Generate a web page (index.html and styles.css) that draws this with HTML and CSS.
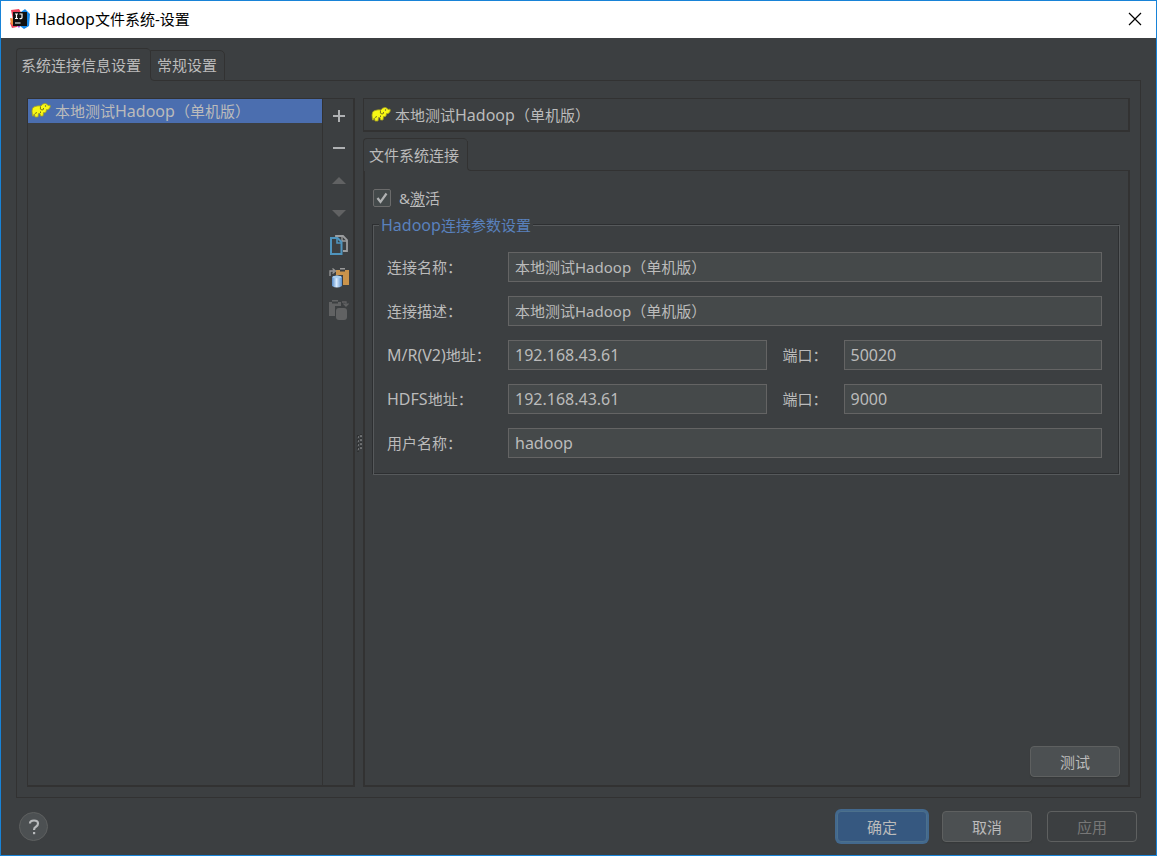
FILE: index.html
```
<!DOCTYPE html>
<html lang="zh-CN">
<head>
<meta charset="utf-8">
<title>Hadoop文件系统-设置</title>
<link rel="stylesheet" href="styles.css">
</head>
<body>
<svg class="defs" aria-hidden="true">
  <symbol id="elephant" viewBox="0 0 20 18">
    <path d="M1 9Q1 5 4 4.500Q7 3.500 10 4Q11 1.500 14 1.500Q16 1.500 16.500 3Q18 4 19 3Q20 5 18 7Q16.500 8 15.500 7.500L15 10Q14 11 12.500 10.500L12 14H9.500L9 11.500L7.500 11.500L7 15H4L3.500 12Q2.500 12 2.500 14H1.500Z" fill="#f8f814" stroke="#a5a021" stroke-width=".8"/>
    <path d="M9.500 4.500Q8.500 8 11 8Q13 8 12.500 6M4.500 12L5.500 10M9.500 11V9.500" fill="none" stroke="#77751f" stroke-width="1"/>
    <circle cx="14.500" cy="4" r=".7" fill="#555"/>
  </symbol>
</svg>
<div class="window">
  <header class="titlebar">
    <svg class="logo" width="20" height="20" viewBox="0 0 20 20" aria-hidden="true">
      <path d="M1 1L9 0 12 5 7 18 2 19 0 14 3 11Z" fill="#f0435a"/>
      <path d="M0 9L6 10 5 17 1 15Z" fill="#f68b3c"/>
      <path d="M11 3L15 0 20 5 19 17 14 20 10 17Z" fill="#1687e8"/>
      <path d="M6 16L11 16 9 19Z" fill="#b34dd0"/>
      <rect x="3" y="3" width="14" height="14" fill="#111"/>
      <path d="M5 5H8M6.500 5V9.500M5 9.500H8M9.500 5H12V8.500Q12 9.800 9.500 9.500M5 14H10.500" fill="none" stroke="#fff" stroke-width="1.200"/>
    </svg>
    <h1 class="title"><span class="latin">Hadoop</span>文件系统-设置</h1>
    <button class="close" type="button" aria-label="关闭"><svg width="14" height="14" viewBox="0 0 14 14"><path d="M1 1L13 13M13 1L1 13" stroke="#000" stroke-width="1.200"/></svg></button>
  </header>
  <main class="body">
    <div class="tabs" role="tablist">
      <button class="tab tab-active" type="button" role="tab" aria-selected="true">系统连接信息设置</button>
      <button class="tab tab-idle" type="button" role="tab" aria-selected="false">常规设置</button>
      <span class="tab-line"></span>
    </div>
    <div class="page">
      <section class="connections">
        <div class="list">
          <button class="list-item" type="button"><svg class="elephant"><use href="#elephant"/></svg><span>本地测试<span class="latin">Hadoop</span>（单机版）</span></button>
        </div>
        <div class="tools">
          <div class="tool-group">
            <button class="tool" type="button" aria-label="添加"><svg width="20" height="20" viewBox="0 0 20 20"><path d="M10 4V16M4 10H16" stroke="#afb1b3" stroke-width="2"/></svg></button>
            <button class="tool" type="button" aria-label="删除"><svg width="20" height="20" viewBox="0 0 20 20"><path d="M4 10H16" stroke="#afb1b3" stroke-width="2"/></svg></button>
            <button class="tool" type="button" aria-label="上移" disabled><svg width="20" height="20" viewBox="0 0 20 20"><path d="M10 6L17 13H3Z" fill="#616263"/></svg></button>
            <button class="tool" type="button" aria-label="下移" disabled><svg width="20" height="20" viewBox="0 0 20 20"><path d="M3 7H17L10 14Z" fill="#616263"/></svg></button>
            <button class="tool" type="button" aria-label="复制"><svg width="20" height="20" viewBox="0 0 20 20"><path d="M7 3V1H14L18 5V16H14" fill="none" stroke="#9b9d9f" stroke-width="1.800"/><path d="M13 1V6H18" fill="none" stroke="#9b9d9f" stroke-width="1.300"/><path d="M2 3H8.500L12.500 7V19H2Z" fill="#3c3f41" stroke="#4f94bd" stroke-width="2"/><path d="M8 3V8H13" fill="none" stroke="#4f94bd" stroke-width="1.600"/></svg></button>
            <button class="tool" type="button" aria-label="导入"><svg width="20" height="20" viewBox="0 0 20 20"><defs><linearGradient id="can"><stop stop-color="#568cc8"/><stop offset=".45" stop-color="#d9ecff"/><stop offset="1" stop-color="#568cc8"/></linearGradient></defs><path d="M7 2H11V3.500H16V2H20V17H14V7H7Z" fill="#c9934b"/><path d="M11 0H16V1.500H11Z" fill="#999"/><path d="M1 8V3H5M3.500 .5L6.500 3L3.500 5.500" fill="none" stroke="#999" stroke-width="1.300"/><path d="M3 9Q8 6 13 9V18Q8 21 3 18Z" fill="url(#can)"/><ellipse cx="8" cy="9" rx="4.500" ry="1.300" fill="#a8ceee"/></svg></button>
            <button class="tool" type="button" aria-label="粘贴" disabled><svg width="20" height="20" viewBox="0 0 20 20"><path d="M0 2H3V3.500H9V2H12V6H6V16H0Z" fill="#616263"/><path d="M3 0H9V1.500H3Z" fill="#616263"/><path d="M13 2H17V5M14.500 3.500L17 6L19.500 3.500" fill="none" stroke="#616263" stroke-width="1.300"/><rect x="7" y="8" width="11" height="12" rx="3" fill="#616263"/></svg></button>
          </div>
        </div>
      </section>
      <div class="splitter" aria-hidden="true"><svg width="6" height="18" viewBox="0 0 6 18"><path d="M1 2H3M1 6H3M1 10H3M1 14H3M1 18H3M4 1H6M4 5H6M4 9H6M4 13H6" stroke="#232425"/><path d="M2 3H3M2 7H3M2 11H3M2 15H3M4 2H6M4 6H6M4 10H6M4 14H6" stroke="#a2a4a5"/></svg></div>
      <section class="details">
        <div class="heading"><svg class="elephant"><use href="#elephant"/></svg><span>本地测试<span class="latin">Hadoop</span>（单机版）</span></div>
        <div class="tabs" role="tablist">
          <button class="tab tab-active tab-inner" type="button" role="tab" aria-selected="true">文件系统连接</button>
          <span class="tab-line tab-line-joined"></span>
        </div>
        <form class="panel">
          <label class="check">
            <span class="box"><input class="tick" type="checkbox" checked><svg class="mark" width="18" height="18" viewBox="0 0 18 18"><path d="M4.500 9L7.500 13L13.500 4.500" fill="none" stroke="#b0b2b3" stroke-width="2.200"/></svg></span>
            <span>&amp;<u>激</u>活</span>
          </label>
          <fieldset class="group">
            <legend class="legend"><span class="latin">Hadoop</span>连接参数设置</legend>
            <div class="fields">
              <label for="name">连接名称：</label><input class="field wide" id="name" type="text" value="本地测试Hadoop（单机版）">
              <label for="desc">连接描述：</label><input class="field wide" id="desc" type="text" value="本地测试Hadoop（单机版）">
              <label for="mr"><span class="latin">M/R(V2)</span>地址：</label><input class="field latin" id="mr" type="text" value="192.168.43.61">
              <label class="port" for="mrport">端口：</label><input class="field latin" id="mrport" type="text" value="50020">
              <label for="hdfs"><span class="latin">HDFS</span>地址：</label><input class="field latin" id="hdfs" type="text" value="192.168.43.61">
              <label class="port" for="hdfsport">端口：</label><input class="field latin" id="hdfsport" type="text" value="9000">
              <label for="user">用户名称：</label><input class="field latin wide" id="user" type="text" value="hadoop">
            </div>
          </fieldset>
          <div class="panel-actions"><button class="btn" type="button">测试</button></div>
        </form>
      </section>
    </div>
  </main>
  <footer class="footer">
    <button class="help" type="button" aria-label="帮助"><svg width="14" height="18" viewBox="0 0 14 18"><path d="M3 5.500Q3 2.500 7 2.500Q11 2.500 11 5.500Q11 7.500 9 8.700Q7 10 7 12" fill="none" stroke="#b8babc" stroke-width="2.200"/><path d="M6 14H8.200V16.200H6Z" fill="#b8babc"/></svg></button>
    <button class="btn btn-primary" type="button">确定</button>
    <button class="btn btn-cancel" type="button">取消</button>
    <button class="btn" type="button" disabled>应用</button>
  </footer>
</div>
</body>
</html>
```
FILE: styles.css
```
:root {
  --bg: #3c3f41;
  --line: #323232;
  --text: #bbbbbb;
}
* { box-sizing: border-box; }
body {
  margin: 0;
  background: var(--bg);
  color: var(--text);
  font: 15px/20px "Noto Sans", "Noto Sans CJK SC", sans-serif;
}
button, input { font: inherit; color: inherit; }
button { padding: 0; border: 0; background: none; }
svg { flex: none; display: block; }
.defs { position: absolute; width: 0; height: 0; }
.latin { font-size: 16px; }
.window {
  min-height: 100vh;
  display: flex;
  flex-direction: column;
  border: 1px solid #1883d7;
}
.titlebar {
  height: 37px;
  display: flex;
  align-items: center;
  gap: 5px;
  padding: 0 14px 2px 9px;
  background: #fff;
  color: #000;
}
.title { flex: 1; margin: 0; font-size: 15px; font-weight: 400; }
.body {
  flex: 1;
  display: flex;
  flex-direction: column;
  padding: 10px 15px 0;
}
.tabs { display: flex; align-items: flex-end; }
.tab { border: 1px solid var(--line); white-space: nowrap; }
.tab-active {
  height: 33px;
  padding: 0 9px 1px 4px;
  border-width: 1px 0 0 1px;
  border-radius: 4px 4px 0 0;
}
.tab-inner { padding: 0 8px 1px 5px; }
.tab-idle {
  height: 31px;
  padding: 0 7px 2px 6px;
  border-radius: 0 5px 0 4px;
}
.tab-line { flex: 1; border-bottom: 1px solid var(--line); }
.tab-line-joined {
  height: 30px;
  border-left: 1px solid var(--line);
  border-bottom-left-radius: 4px;
}
.page {
  flex: 1;
  display: flex;
  padding: 17px 10px 10px;
  border: 1px solid var(--line);
  border-top: 0;
}
.connections {
  flex: 0 0 328px;
  display: flex;
  border: 1px solid var(--line);
  border-width: 1px 2px 2px 1px;
}
.list { flex: 1; border-right: 1px solid var(--line); }
.list-item {
  width: 100%;
  height: 24px;
  display: flex;
  align-items: center;
  gap: 4px;
  padding-left: 3px;
  background: #4b6eaf;
}
.elephant { width: 20px; height: 18px; }
.tools { width: 30px; padding: 2px 0 0 2px; }
.tool-group {
  height: 224px;
  display: flex;
  flex-direction: column;
  justify-content: space-between;
}
.tool { height: 30px; display: grid; place-items: center; }
.splitter { width: 8px; display: grid; place-items: center; }
.details { flex: 1; min-width: 0; display: flex; flex-direction: column; }
.heading {
  height: 34px;
  display: flex;
  align-items: center;
  gap: 4px;
  padding-left: 7px;
  margin-bottom: 6px;
  border: solid var(--line);
  border-width: 1px 2px 2px 1px;
}
.panel {
  flex: 1;
  display: flex;
  flex-direction: column;
  padding: 18px 8px 8px 7px;
  border: 2px solid var(--line);
  border-top: 0;
}
.check {
  height: 18px;
  display: flex;
  align-items: center;
  gap: 8px;
  padding-left: 1px;
}
.check u { text-underline-offset: 2px; }
.box { display: grid; }
.tick {
  grid-area: 1 / 1;
  appearance: none;
  width: 18px;
  height: 18px;
  margin: 0;
  border: 1px solid #6b6b6b;
  border-radius: 2px;
  background: #43494a;
}
.mark { grid-area: 1 / 1; pointer-events: none; }
.group {
  min-width: 0;
  margin: 8px 0 0 1px;
  padding: 17px 17px 16px 13px;
  border: 1px solid #56595b;
  box-shadow: -1px -1px 0 #2d2f31, inset -1px -1px 0 #2d2f31;
}
.legend {
  margin-left: -8px;
  padding: 0 2px;
  line-height: 20px;
  background: var(--bg);
  color: #5981bd;
}
.fields {
  display: grid;
  grid-template-columns: 121px 1fr 77px 1fr;
  row-gap: 14px;
  align-items: center;
}
.port { padding-left: 16px; }
.field {
  width: 100%;
  min-width: 0;
  height: 30px;
  padding: 0 6px 2px;
  border: 1px solid #646464;
  border-radius: 0;
  background: #45494a;
}
.field.latin { padding-bottom: 0; }
.wide { grid-column: 2 / -1; }
.panel-actions {
  display: flex;
  justify-content: flex-end;
  margin-top: auto;
}
.btn {
  width: 90px;
  height: 31px;
  border: 1px solid #5e6060;
  border-radius: 4px;
  background: #4c5052;
  box-shadow: 0 1px 1px #36393a;
}
.btn:disabled {
  background: none;
  color: #777777;
  box-shadow: none;
}
.btn-primary {
  border-color: #4c708c;
  background: #365880;
  box-shadow: 0 0 0 2px #43698e;
}
.btn-cancel { margin: 0 15px; }
.footer {
  display: flex;
  align-items: center;
  padding: 13px 19px 13px 18px;
}
.help {
  width: 29px;
  height: 29px;
  margin-right: auto;
  display: grid;
  place-items: center;
  border: 1px solid #5e6060;
  border-radius: 50%;
  background: #4c5052;
}
```
